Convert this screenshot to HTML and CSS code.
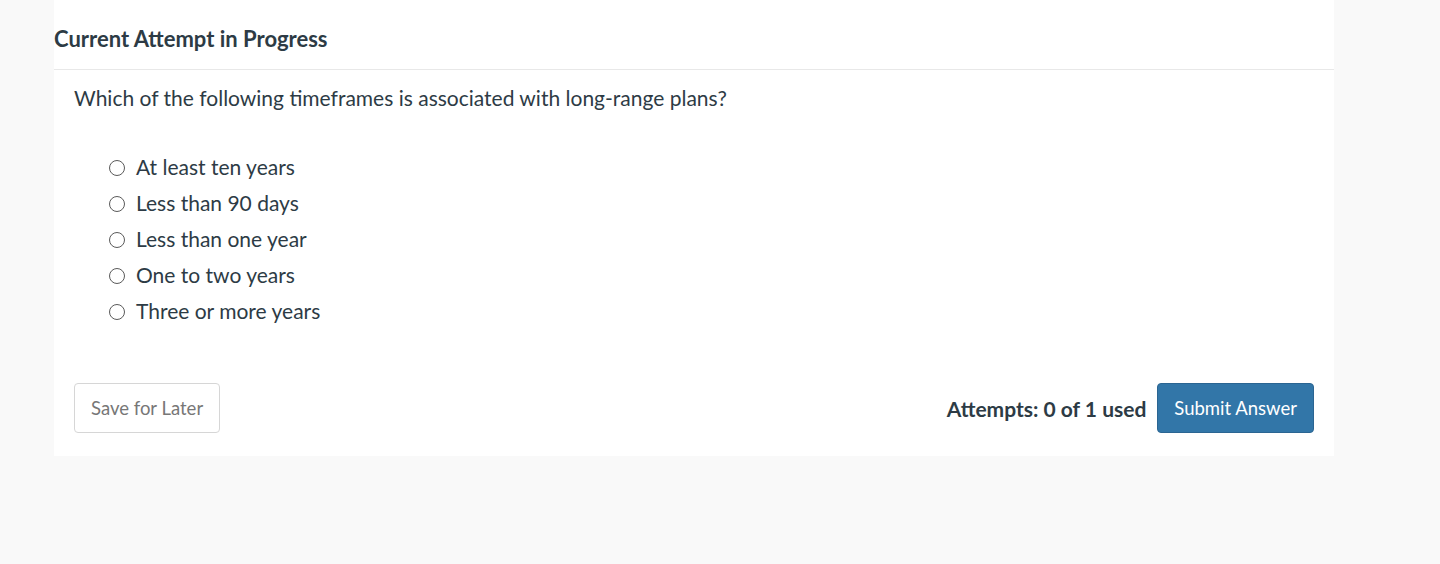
FILE: index.html
```html
<!DOCTYPE html>
<html lang="en">
<head>
<meta charset="utf-8">
<title>Current Attempt in Progress</title>
<link rel="stylesheet" href="styles.css">
</head>
<body>
<div class="card">
  <div class="card-header">Current Attempt in Progress</div>
  <div class="card-body">
    <p class="question">Which of the following timeframes is associated with long-range plans?</p>
    <ul class="options">
      <li><label><input type="radio" name="a"><span>At least ten years</span></label></li>
      <li><label><input type="radio" name="a"><span>Less than 90 days</span></label></li>
      <li><label><input type="radio" name="a"><span>Less than one year</span></label></li>
      <li><label><input type="radio" name="a"><span>One to two years</span></label></li>
      <li><label><input type="radio" name="a"><span>Three or more years</span></label></li>
    </ul>
    <div class="footer">
      <button class="btn btn-secondary">Save for Later</button>
      <div class="footer-right">
        <span class="attempts">Attempts: 0 of 1 used</span>
        <button class="btn btn-primary">Submit Answer</button>
      </div>
    </div>
  </div>
</div>
</body>
</html>
```
FILE: styles.css
```css
html, body {
  margin: 0;
  padding: 0;
  background: #f9f9f9;
  font-family: Lato, "Open Sans", sans-serif;
  color: #2d3b45;
}
.card {
  margin-left: 54px;
  width: 1280px;
  background: #ffffff;
}
.card-header {
  height: 70px;
  box-sizing: border-box;
  padding-top: 25px;
  font-size: 22px;
  font-weight: 700;
  line-height: 28px;
  border-bottom: 1px solid #e8e8e8;
}
.card-body {
  padding: 0 20px 23px 20px;
}
.question {
  margin: 0;
  padding-top: 14px;
  font-size: 21px;
  line-height: 28px;
}
.options {
  list-style: none;
  margin: 37px 0 0 0;
  padding: 0 0 0 35px;
}
.options li {
  height: 36px;
  display: flex;
  align-items: center;
}
.options label {
  display: flex;
  align-items: center;
  font-size: 21px;
  line-height: 28px;
}
.options input[type="radio"] {
  appearance: none;
  -webkit-appearance: none;
  width: 16px;
  height: 16px;
  margin: 1px 11px 0 0;
  border: 1px solid #5a5a5a;
  border-radius: 50%;
  background: #fff;
  box-sizing: border-box;
}
.footer {
  margin-top: 54px;
  display: flex;
  justify-content: space-between;
  align-items: center;
}
.footer-right {
  display: flex;
  align-items: center;
  gap: 11px;
}
.attempts {
  font-size: 21px;
  font-weight: 700;
}
.btn {
  height: 50px;
  padding: 0 16px;
  font-family: Lato, "Open Sans", sans-serif;
  font-size: 18.5px;
  border-radius: 4px;
  cursor: pointer;
}
.btn-secondary {
  background: #fff;
  color: #777777;
  border: 1px solid #d6d6d6;
}
.btn-primary {
  background: #3276a8;
  color: #ffffff;
  border: 1px solid #2b6592;
}
```
